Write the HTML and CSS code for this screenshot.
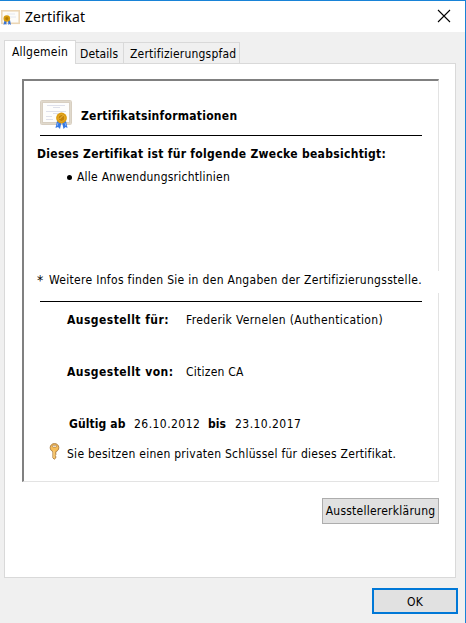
FILE: index.html
```html
<!DOCTYPE html>
<html lang="de">
<head>
<meta charset="utf-8">
<title>Zertifikat</title>
<link rel="stylesheet" href="styles.css">
</head>
<body>
<div class="window">
  <header class="titlebar">
    <svg class="title-icon" width="19" height="17" viewBox="0 0 19 17">
      <rect x=".8" y="1.800" width="17.400" height="12.500" fill="#fdfcf9" stroke="#ecd6b4" stroke-width="1.600"/>
      <path d="M6 5h8M9 8h6" stroke="#e4e8f0"/>
      <path d="M3.500 11l-1 5 1.700-1 1 1 .5-4zM7 12l.5 4 1-1 1.500 1-1-5z" fill="#3975d5"/>
      <circle cx="5.800" cy="9.500" r="3.300" fill="#d79b0b"/>
      <circle cx="5.800" cy="9.500" r="1.500" fill="#b17a06"/>
    </svg>
    <h1 class="title">Zertifikat</h1>
    <svg class="close" width="14" height="14" viewBox="0 0 14 14"><path d="M1 1l12 12M13 1L1 13" stroke="#000" stroke-width="1.100"/></svg>
  </header>
  <nav class="tabs">
    <div class="tab active">Allgemein</div>
    <div class="tab details">Details</div>
    <div class="tab path">Zertifizierungspfad</div>
  </nav>
  <main class="panel">
    <section class="certificate">
      <div class="heading">
        <svg width="33" height="30" viewBox="0 0 33 30">
          <rect x="1.500" y="1.500" width="29" height="22" rx=".8" fill="#fdfdfc" stroke="#d8cfc1" stroke-width="3"/>
          <rect x="1.500" y="1.500" width="29" height="22" fill="none" stroke="#e9e2d7" stroke-width="1" stroke-dasharray="1 1"/>
          <path d="M7 5.500h18M13 7.500h7M6 11.500h20M13 13.500h6M6 16.500h6M6 19.500h7" stroke="#dadde8" stroke-width=".9"/>
          <path d="M17 21l-1.500 7 2.500-1 2 2 1.500-7zM22 22l1.500 7 2-2 2 1-1.500-7z" fill="#3679e4"/>
          <path d="M18 23l-1 3M25 23l1 3" stroke="#82b0f8"/>
          <circle cx="21.500" cy="18" r="5.400" fill="#dc9c10"/>
          <circle cx="21.500" cy="18" r="3.400" fill="#c28109" stroke="#edb634" stroke-width=".8"/>
          <path d="M19.500 19l3.500-3.500" stroke="#f2c34a"/>
        </svg>
        <h2 class="info-title">Zertifikatsinformationen</h2>
      </div>
      <hr>
      <h3 class="purpose">Dieses Zertifikat ist für folgende Zwecke beabsichtigt:</h3>
      <div class="policy"><i class="bullet"></i><span>Alle Anwendungsrichtlinien</span></div>
      <div class="note"><span class="star">*</span><span class="note-text">Weitere Infos finden Sie in den Angaben der Zertifizierungsstelle.</span></div>
      <hr>
      <div class="row"><b>Ausgestellt für:</b><span class="subject">Frederik Vernelen (Authentication)</span></div>
      <div class="row issuer-row"><b>Ausgestellt von:</b><span>Citizen CA</span></div>
      <div class="validity"><b class="from">Gültig ab</b><span class="date date-from">26.10.2012</span><b class="until">bis</b><span class="date">23.10.2017</span></div>
      <div class="key-row">
        <svg width="11" height="17" viewBox="0 0 11 17">
          <path d="M5.500.6C3 .6 1.200 2.300 1.200 4.600c0 1.800 1 3.300 2.700 4v6.300l1.400 1.300 1.500-1.300v-1.700l-.7-.7.7-.8V8.700c1.800-.6 3-2.100 3-4.100C9.800 2.300 8 .6 5.500.6z" fill="#f6bd58" stroke="#a7783e" stroke-width=".9"/>
          <rect x="3.400" y="2.300" width="4.200" height="1.800" rx=".9" fill="#fff" stroke="#a7783e" stroke-width=".7"/>
          <path d="M4.900 7.500v7.500" stroke="#ffe09a" stroke-width=".8"/>
        </svg>
        <span class="key-text">Sie besitzen einen privaten Schlüssel für dieses Zertifikat.</span>
      </div>
    </section>
    <button class="statement">Ausstellererklärung</button>
  </main>
  <footer><button class="ok">OK</button></footer>
</div>
</body>
</html>
```
FILE: styles.css
```css
* { box-sizing: border-box; }
body {
  margin: 0;
  color: #000;
  background: #f0f0f0;
  font: 12px/16px "DejaVu Sans Condensed", "DejaVu Sans", sans-serif;
  font-stretch: condensed;
  letter-spacing: .24px;
}
h1, h2, h3 { margin: 0; font-size: inherit; }
svg { display: block; flex: none; }
span, b, h2, h3 { white-space: nowrap; }
b, h2, h3 { font-weight: 700; }
.window {
  width: 466px;
  height: 623px;
  border-top: 1px solid #1883d7;
  border-right: 1px solid #1883d7;
  background: #f0f0f0;
}
.titlebar { display: flex; height: 31px; padding-left: 1px; background: #fff; }
.title-icon { margin-top: 8px; }
.title { margin: 6px 0 0 5px; font: 400 14px/20px "Noto Sans", sans-serif; letter-spacing: .1px; }
.close { margin: 8px 14px 0 auto; }

.tabs { display: flex; align-items: flex-start; height: 31px; margin-left: 4px; padding-top: 8px; }
.tab { height: 21px; margin-top: 2px; padding: 3px 0 0 4px; border: 1px solid #d9d9d9; border-width: 1px 1px 0 0; }
.tab.active { position: relative; z-index: 1; width: 72px; height: 24px; margin-top: 0; padding: 3px 0 0 7px; border-left-width: 1px; background: #fff; }
.details { width: 48px; letter-spacing: .1px; }
.path { width: 116px; padding-left: 6px; letter-spacing: .2px; }

.panel { width: 452px; height: 515px; margin-left: 4px; padding: 15px 16px 0 17px; border: 1px solid #d9d9d9; background: #fff; }
.certificate {
  width: 417px;
  height: 403px;
  padding: 19px 0 0 14px;
  border: 1px solid #e3e3e3;
  border-top: 2px groove #696969;
  border-top: 2px solid #808080;
  border-left: 2px solid #808080;
  box-shadow: inset 0 0 0 0 #696969;
}
.heading { display: flex; height: 35px; padding-left: 2px; }
.info-title { margin: 8px 0 0 8px; letter-spacing: .26px; }
hr { width: 382px; height: 1px; margin: 0 0 0 2px; border: 0; background: #000; }
.purpose { margin: 10px 0 7px -1px; letter-spacing: .3px; }
.policy { display: flex; align-items: center; height: 16px; padding-left: 29px; }
.bullet { width: 5px; height: 5px; margin-right: 5px; border-radius: 50%; background: #000; }
.note { position: relative; display: flex; width: 402px; height: 22px; margin: 86px 0 8px; padding-top: 1px; background: #fff; letter-spacing: .31px; }
.star { width: 12px; margin-left: -1px; font-size: 14px; }
.row { display: flex; margin-top: 10px; padding-left: 29px; }
.row b { width: 119px; letter-spacing: .45px; }
.subject { letter-spacing: .35px; }
.issuer-row { margin-top: 36px; }
.validity { display: flex; margin-top: 36px; padding-left: 31px; }
.validity .from { width: 65px; letter-spacing: .1px; }
.date { letter-spacing: .45px; }
.date-from { width: 74px; }
.until { width: 27px; letter-spacing: 0; }
.key-row { display: flex; align-items: flex-start; height: 20px; margin-top: 11px; padding-left: 11px; }
.key-text { margin: 3px 0 0 7px; letter-spacing: .26px; }
button { display: flex; align-items: center; justify-content: center; padding: 0; color: #000; background: #e1e1e1; border: 1px solid #adadad; font: inherit; letter-spacing: .24px; }
.statement { width: 117px; height: 26px; margin: 16px 0 0 auto; }
footer { display: flex; justify-content: flex-end; padding: 10px 7px 0 0; }
.ok { width: 86px; height: 26px; padding-top: 1px; border: 2px solid #0078d7; }
```
